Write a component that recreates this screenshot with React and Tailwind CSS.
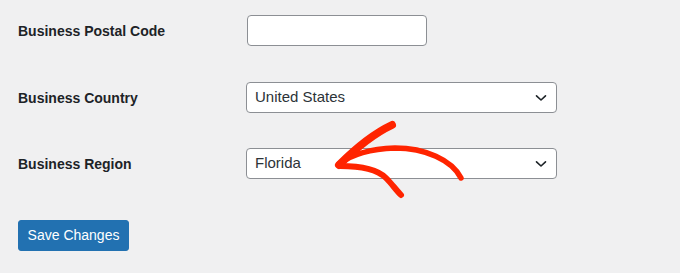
const font = { fontFamily: '"Liberation Sans", Arial, sans-serif' };

const Chevron = () => (
  <svg width="12" height="8" viewBox="0 0 12 8" className="shrink-0">
    <path d="M1.5 1.8 L6 6 L10.5 1.8" fill="none" stroke="#1d2327" strokeWidth="1.6" strokeLinecap="round" strokeLinejoin="round" />
  </svg>
);

const SelectBox = ({ value }) => (
  <div className="flex items-center justify-between w-[311px] h-[31px] pl-[8px] pr-[9px] bg-white border border-[#8c8f94] rounded-[4px] text-[15px] text-[#2c3338]">
    <span>{value}</span>
    <Chevron />
  </div>
);

const Row = ({ label, children }) => (
  <div className="grid grid-cols-[228px_1fr] items-center">
    <div className="text-[14px] font-bold text-[#1d2327] pt-px">{label}</div>
    <div>{children}</div>
  </div>
);

const App = () => {
  return (
    <div className="relative w-[680px] h-[273px] bg-[#f0f0f1] overflow-hidden" style={font}>
      <div className="flex flex-col pl-[18px] pt-[15px]">
        <Row label="Business Postal Code">
          <div className="ml-px w-[180px] h-[31px] bg-white border border-[#8c8f94] rounded-[4px]" />
        </Row>
        <div className="mt-[36px]">
          <Row label="Business Country">
            <SelectBox value="United States" />
          </Row>
        </div>
        <div className="mt-[35px]">
          <Row label="Business Region">
            <SelectBox value="Florida" />
          </Row>
        </div>
        <div className="mt-[41px]">
          <button className="h-[31px] w-[111px] bg-[#2271b1] border border-[#2271b1] rounded-[3px] text-white text-[14px]">
            Save Changes
          </button>
        </div>
      </div>

      {/* hand-drawn red arrow */}
      <svg className="absolute left-0 top-0 pointer-events-none" width="680" height="273" viewBox="0 0 680 273">
        <g fill="none" stroke="#ff2400" strokeLinecap="round" strokeLinejoin="round">
          <path d="M392 125 C377 132 358 146 339 165" strokeWidth="8" />
          <path d="M339 164 C352 154 370 149 395 148 C425 148 452 160 461 178" strokeWidth="5.5" />
          <path d="M340 166 C358 166 376 168 386 178 C392 184 396 190 401 195" strokeWidth="6" />
        </g>
      </svg>
    </div>
  );
};

export default App;
